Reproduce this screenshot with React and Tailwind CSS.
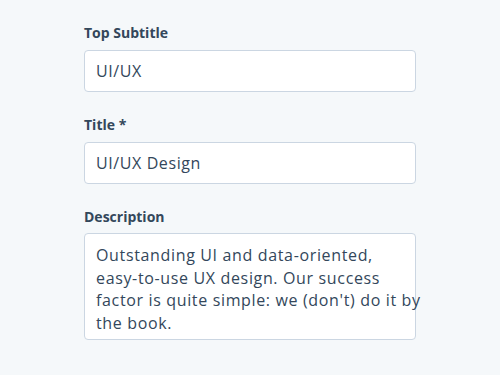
const FIELDS = [
  { id: 'subtitle', label: 'Top Subtitle', value: 'UI/UX' },
  { id: 'title', label: 'Title *', value: 'UI/UX Design' },
]

// wrapped to match the reference's line breaks
const DESCRIPTION = [
  'Outstanding UI and data-oriented,',
  'easy-to-use UX design. Our success',
  "factor is quite simple: we (don't) do it by",
  'the book.',
]

export default function App() {
  return (
    <div
      className="min-h-[375px] w-[500px] bg-[#f5f8fa] text-[#33475b] pt-[23px] px-[84px]"
      style={{ fontFamily: '"Open Sans", "Liberation Sans", sans-serif' }}
    >
      {FIELDS.map(f => (
        <div key={f.id} className="mb-[23px]">
          <label className="block text-[14px] leading-[20px] font-bold mb-[7px]">{f.label}</label>
          <div className="h-[42px] w-[332px] bg-white border border-[#cbd6e2] rounded-[4px] px-[11px] flex items-center text-[16px] tracking-[0.6px]">
            {f.value}
          </div>
        </div>
      ))}

      <div>
        <label className="block text-[14px] leading-[20px] font-bold mb-[6px]">Description</label>
        <div className="h-[107px] w-[332px] bg-white border border-[#cbd6e2] rounded-[4px] px-[11px] pt-[10px] text-[16px] leading-[22.5px] tracking-[0.65px] whitespace-nowrap">
          {DESCRIPTION.map(line => (
            <div key={line}>{line}</div>
          ))}
        </div>
      </div>
    </div>
  )
}
